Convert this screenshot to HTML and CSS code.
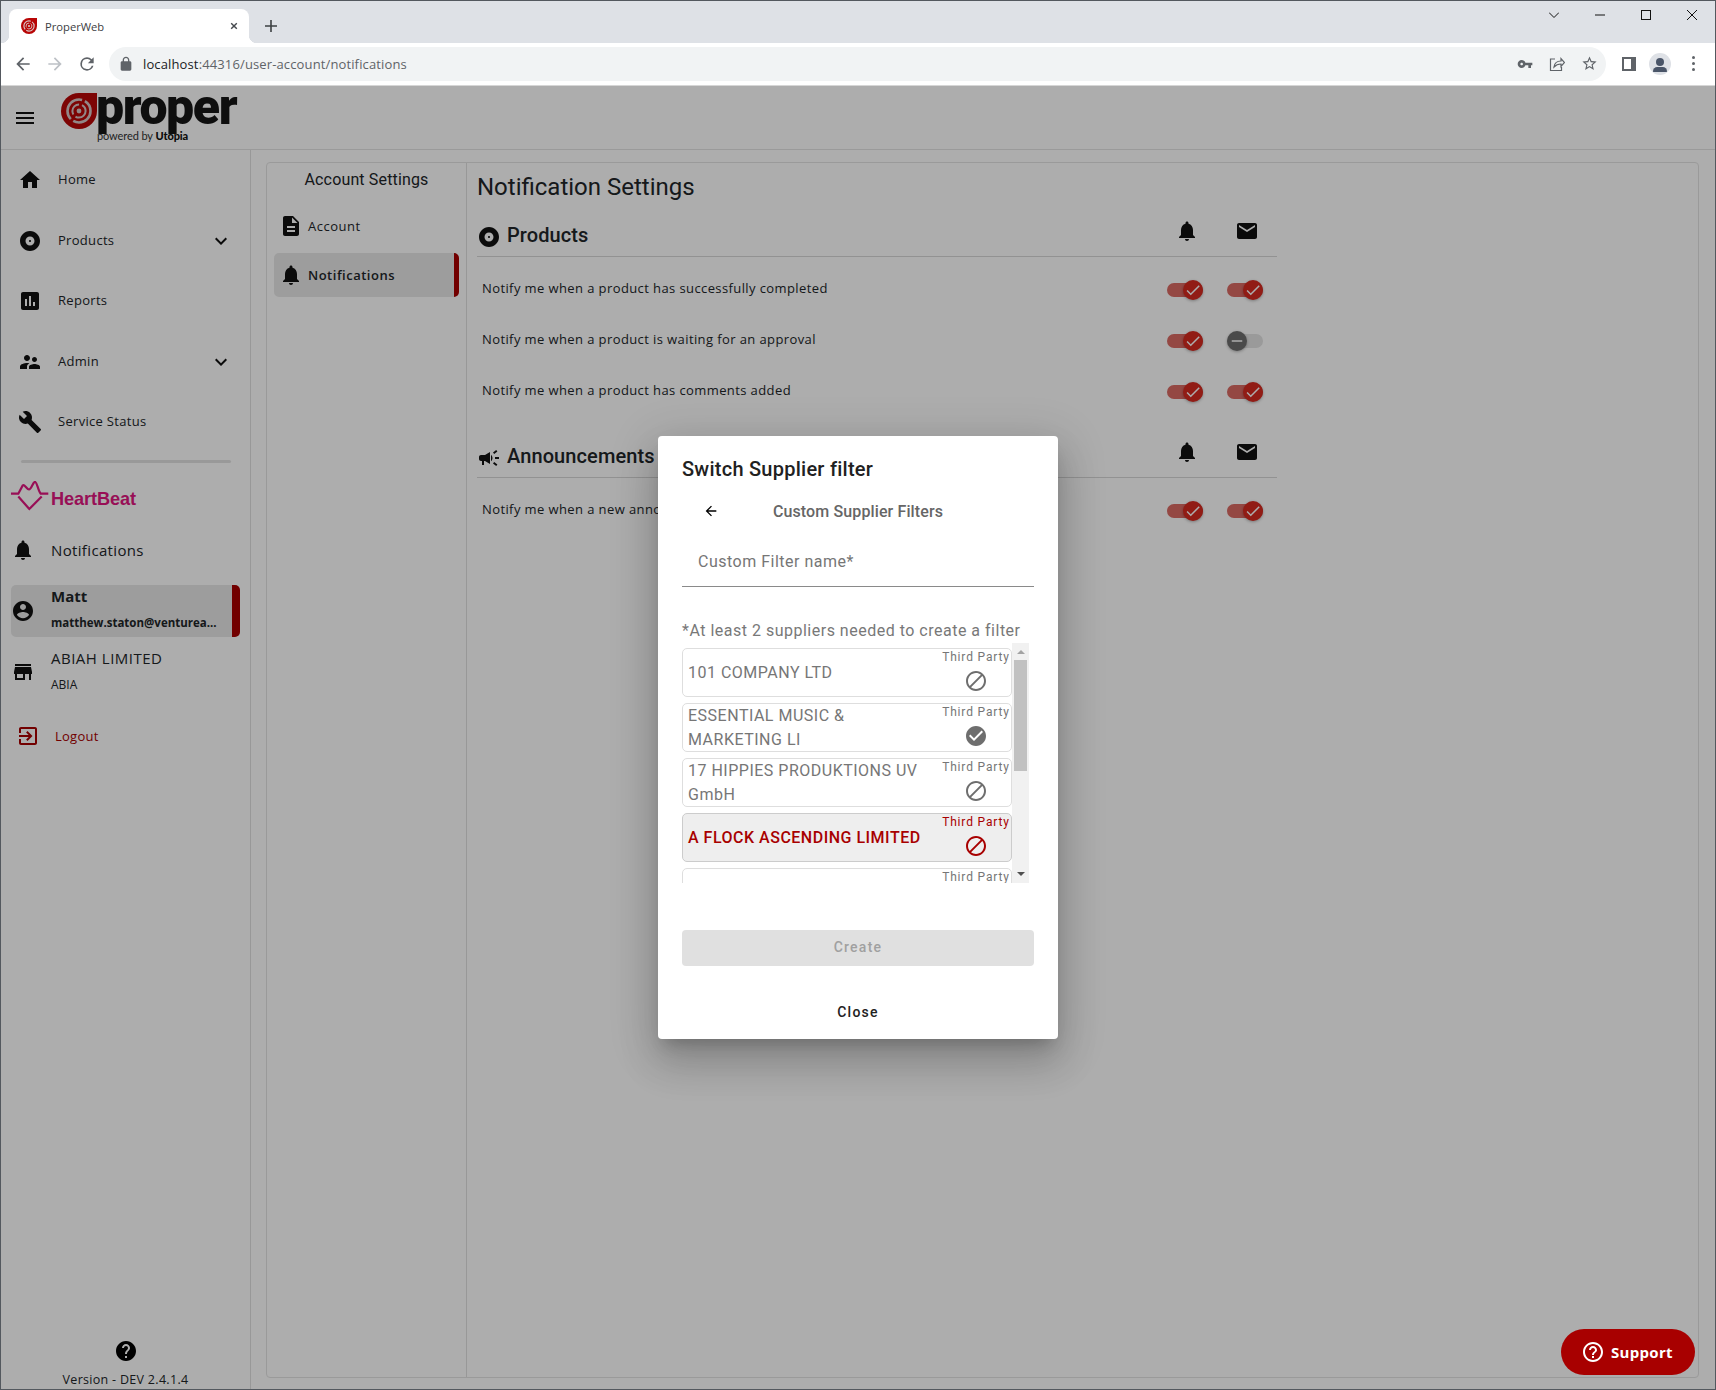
FILE: index.html
```html
<!DOCTYPE html>
<html lang="en">
<head>
<meta charset="UTF-8">
<meta name="viewport" content="width=device-width, initial-scale=1.0">
<title>ProperWeb</title>
<link rel="stylesheet" href="styles.css">
</head>
<body>

<svg class="sprite" xmlns="http://www.w3.org/2000/svg">
  <symbol id="i-menu" viewBox="0 0 24 24"><path d="M3 18h18v-2H3v2zm0-5h18v-2H3v2zm0-7v2h18V6H3z"/></symbol>
  <symbol id="i-home" viewBox="0 0 24 24"><path d="M10 20v-6h4v6h5v-8h3L12 3 2 12h3v8z"/></symbol>
  <symbol id="i-album" viewBox="0 0 24 24"><path d="M12 2C6.48 2 2 6.48 2 12s4.48 10 10 10 10-4.48 10-10S17.52 2 12 2zm0 14.5c-2.49 0-4.5-2.01-4.5-4.5S9.51 7.5 12 7.5s4.5 2.01 4.5 4.5-2.01 4.5-4.5 4.5zm0-5.5c-.55 0-1 .45-1 1s.45 1 1 1 1-.45 1-1-.45-1-1-1z"/></symbol>
  <symbol id="i-chart" viewBox="0 0 24 24"><path d="M19 3H5c-1.1 0-2 .9-2 2v14c0 1.1.9 2 2 2h14c1.1 0 2-.9 2-2V5c0-1.1-.9-2-2-2zM9 17H7v-7h2v7zm4 0h-2V7h2v10zm4 0h-2v-4h2v4z"/></symbol>
  <symbol id="i-people" viewBox="0 0 24 24"><path d="M16.5 12c1.38 0 2.49-1.12 2.49-2.5S17.88 7 16.5 7C15.12 7 14 8.12 14 9.5s1.12 2.5 2.5 2.5zM9 11c1.66 0 2.99-1.34 2.99-3S10.66 5 9 5C7.34 5 6 6.34 6 8s1.34 3 3 3zm7.5 3c-1.83 0-5.5.92-5.5 2.75V19h11v-2.25c0-1.83-3.67-2.75-5.5-2.75zM9 13c-2.33 0-7 1.17-7 3.5V19h7v-2.25c0-.85.33-2.34 2.37-3.47C10.5 13.1 9.66 13 9 13z"/></symbol>
  <symbol id="i-wrench" viewBox="0 0 24 24"><path d="M22.7 19l-9.1-9.1c.9-2.3.4-5-1.5-6.9-2-2-5-2.4-7.4-1.3L9 6 6 9 1.6 4.7C.4 7.1.9 10.1 2.9 12.1c1.9 1.9 4.6 2.4 6.9 1.5l9.1 9.1c.4.4 1 .4 1.4 0l2.3-2.3c.5-.4.5-1.1.1-1.4z"/></symbol>
  <symbol id="i-chevron" viewBox="0 0 24 24"><path d="M16.59 8.59L12 13.17 7.41 8.59 6 10l6 6 6-6z"/></symbol>
  <symbol id="i-bell" viewBox="0 0 24 24"><path d="M12 22c1.1 0 2-.9 2-2h-4c0 1.1.89 2 2 2zm6-6v-5c0-3.07-1.64-5.64-4.5-6.32V4c0-.83-.67-1.5-1.5-1.5s-1.5.67-1.5 1.5v.68C7.63 5.36 6 7.92 6 11v5l-2 2v1h16v-1l-2-2z"/></symbol>
  <symbol id="i-account" viewBox="0 0 24 24"><path d="M12 2C6.48 2 2 6.48 2 12s4.48 10 10 10 10-4.48 10-10S17.52 2 12 2zm0 3c1.66 0 3 1.34 3 3s-1.34 3-3 3-3-1.34-3-3 1.34-3 3-3zm0 14.2c-2.5 0-4.71-1.28-6-3.22.03-1.99 4-3.08 6-3.08 1.99 0 5.97 1.09 6 3.08-1.29 1.94-3.5 3.22-6 3.22z"/></symbol>
  <symbol id="i-store" viewBox="0 0 24 24"><path d="M20 4H4v2h16V4zm1 10v-2l-1-5H4l-1 5v2h1v6h10v-6h4v6h2v-6h1zm-9 4H6v-4h6v4z"/></symbol>
  <symbol id="i-logout" viewBox="0 0 24 24"><path d="M10.09 15.59L11.5 17l5-5-5-5-1.41 1.41L12.67 11H3v2h9.67l-2.58 2.59zM19 3H5c-1.11 0-2 .9-2 2v4h2V5h14v14H5v-4H3v4c0 1.1.89 2 2 2h14c1.1 0 2-.9 2-2V5c0-1.1-.9-2-2-2z"/></symbol>
  <symbol id="i-doc" viewBox="0 0 24 24"><path d="M14 2H6c-1.1 0-1.99.9-1.99 2L4 20c0 1.1.89 2 1.99 2H18c1.1 0 2-.9 2-2V8l-6-6zm2 16H8v-2h8v2zm0-4H8v-2h8v2zm-3-5V3.5L18.5 9H13z"/></symbol>
  <symbol id="i-mail" viewBox="0 0 24 24"><path d="M20 4H4c-1.1 0-1.99.9-1.99 2L2 18c0 1.1.9 2 2 2h16c1.1 0 2-.9 2-2V6c0-1.1-.9-2-2-2zm0 4l-8 5-8-5V6l8 5 8-5v2z"/></symbol>
  <symbol id="i-campaign" viewBox="0 0 24 24"><path d="M18 11v2h4v-2h-4zm-2 6.61c.96.71 2.21 1.65 3.2 2.39.4-.53.8-1.07 1.2-1.6-.99-.74-2.24-1.68-3.2-2.4-.4.54-.8 1.08-1.2 1.61zM20.4 5.6c-.4-.53-.8-1.07-1.2-1.6-.99.74-2.24 1.68-3.2 2.4.4.53.8 1.07 1.2 1.6.96-.72 2.21-1.65 3.2-2.4zM4 9c-1.1 0-2 .9-2 2v2c0 1.1.9 2 2 2h1v4h2v-4h1l5 3V6L8 9H4zm11.5 3c0-1.33-.58-2.53-1.5-3.35v6.69c.92-.81 1.5-2.01 1.5-3.34z"/></symbol>
  <symbol id="i-help" viewBox="0 0 24 24"><path d="M12 2C6.48 2 2 6.48 2 12s4.48 10 10 10 10-4.48 10-10S17.52 2 12 2zm1 17h-2v-2h2v2zm2.07-7.75l-.9.92C13.45 12.9 13 13.5 13 15h-2v-.5c0-1.1.45-2.1 1.17-2.83l1.24-1.26c.37-.36.59-.86.59-1.41 0-1.1-.9-2-2-2s-2 .9-2 2H8c0-2.21 1.79-4 4-4s4 1.79 4 4c0 .88-.36 1.68-.93 2.25z"/></symbol>
  <symbol id="i-help-outline" viewBox="0 0 24 24"><path d="M11 18h2v-2h-2v2zm1-16C6.48 2 2 6.48 2 12s4.48 10 10 10 10-4.48 10-10S17.52 2 12 2zm0 18c-4.41 0-8-3.59-8-8s3.59-8 8-8 8 3.59 8 8-3.59 8-8 8zm0-14c-2.21 0-4 1.79-4 4h2c0-1.1.9-2 2-2s2 .9 2 2c0 2-3 1.75-3 5h2c0-2.25 3-2.5 3-5 0-2.21-1.79-4-4-4z"/></symbol>
  <symbol id="i-block" viewBox="0 0 24 24"><path d="M12 2C6.48 2 2 6.48 2 12s4.48 10 10 10 10-4.48 10-10S17.52 2 12 2zM4 12c0-4.42 3.58-8 8-8 1.85 0 3.55.63 4.9 1.69L5.69 16.9C4.63 15.55 4 13.85 4 12zm8 8c-1.85 0-3.55-.63-4.9-1.69L18.31 7.1C19.37 8.45 20 10.15 20 12c0 4.42-3.58 8-8 8z"/></symbol>
  <symbol id="i-check-circle" viewBox="0 0 24 24"><path d="M12 2C6.48 2 2 6.48 2 12s4.48 10 10 10 10-4.48 10-10S17.52 2 12 2zm-2 15l-5-5 1.41-1.41L10 14.17l7.59-7.59L19 8l-9 9z"/></symbol>
  <symbol id="i-back" viewBox="0 0 24 24"><path d="M20 11H7.83l5.59-5.59L12 4l-8 8 8 8 1.41-1.41L7.83 13H20v-2z"/></symbol>
  <symbol id="i-check" viewBox="0 0 24 24"><path d="M9 16.17L4.83 12l-1.42 1.41L9 19 21 7l-1.41-1.41z"/></symbol>
  <symbol id="i-minus" viewBox="0 0 24 24"><path d="M19 13H5v-2h14v2z"/></symbol>
  <symbol id="i-lock" viewBox="0 0 24 24"><path d="M18 8h-1V6c0-2.76-2.24-5-5-5S7 3.24 7 6v2H6c-1.1 0-2 .9-2 2v10c0 1.1.9 2 2 2h12c1.1 0 2-.9 2-2V10c0-1.1-.9-2-2-2zm-6-5c1.66 0 3 1.34 3 3v2H9V6c0-1.66 1.34-3 3-3z"/></symbol>
  <symbol id="i-key" viewBox="0 0 24 24"><path d="M12.65 10C11.83 7.67 9.61 6 7 6c-3.31 0-6 2.69-6 6s2.69 6 6 6c2.61 0 4.83-1.67 5.65-4H17v4h4v-4h2v-4H12.65zM7 14c-1.1 0-2-.9-2-2s.9-2 2-2 2 .9 2 2-.9 2-2 2z"/></symbol>
  <symbol id="i-star" viewBox="0 0 24 24"><path d="M22 9.24l-7.19-.62L12 2 9.19 8.63 2 9.24l5.46 4.73L5.82 21 12 17.27 18.18 21l-1.63-7.03L22 9.24zM12 15.4l-3.76 2.27 1-4.28-3.32-2.88 4.38-.38L12 6.1l1.71 4.04 4.38.38-3.32 2.88 1 4.28L12 15.4z"/></symbol>
  <symbol id="i-mark" viewBox="0 0 36 36">
    <path fill="#b80606" d="M18 0H36V18A18 18 0 1 1 18 0Z"/>
    <circle cx="18" cy="18" r="11.5" fill="none" stroke="#d8c8c8" stroke-width="2.6" stroke-dasharray="24 3 30 3"/>
    <circle cx="18" cy="18" r="6.6" fill="none" stroke="#d8c8c8" stroke-width="2" stroke-dasharray="14 3"/>
    <circle cx="18" cy="18" r="2.4" fill="#d8c8c8"/>
  </symbol>
</svg>

<div class="window">

  <div class="tabstrip">
    <div class="tab">
      <svg class="favicon"><use href="#i-mark"/></svg>
      <span class="tab-title">ProperWeb</span>
      <svg class="tab-close" viewBox="0 0 10 10"><path d="M1.5 1.5l7 7m0-7l-7 7"/></svg>
    </div>
    <svg class="tab-new" viewBox="0 0 12 12"><path d="M6 0v12M0 6h12"/></svg>
    <div class="win-controls">
      <svg class="win-chevron" viewBox="0 0 10 6"><path d="M0 .5l5 5 5-5"/></svg>
      <svg class="win-min" viewBox="0 0 10 10"><path d="M0 5h10"/></svg>
      <svg class="win-max" viewBox="0 0 10 10"><rect x=".5" y=".5" width="9" height="9"/></svg>
      <svg class="win-close" viewBox="0 0 10 10"><path d="M0 0l10 10m0-10L0 10"/></svg>
    </div>
  </div>

  <div class="toolbar">
    <svg class="tool-btn" viewBox="0 0 24 24"><use href="#i-back"/></svg>
    <svg class="tool-btn tool-off" viewBox="0 0 24 24"><use href="#i-back" transform="rotate(180 12 12)"/></svg>
    <svg class="tool-reload" viewBox="0 0 24 24"><path d="M17.65 6.35A7.96 7.96 0 0 0 12 4a8 8 0 1 0 7.73 10h-2.08A6 6 0 1 1 12 6c1.66 0 3.14.69 4.22 1.78L13 11h7V4l-2.35 2.35z"/></svg>
    <div class="omnibox">
      <svg class="omni-lock"><use href="#i-lock"/></svg>
      <span class="url"><span class="url-host">localhost</span>:44316/user-account/notifications</span>
      <svg class="omni-key"><use href="#i-key"/></svg>
      <svg class="omni-share" viewBox="0 0 16 16"><path d="M6 3H1.500v11.500h11V11M5 11c.5-4 3-6 7-6V2.500l3.500 4-3.500 4V8c-3 0-5 .8-7 3z"/></svg>
      <svg class="omni-star"><use href="#i-star"/></svg>
    </div>
    <div class="side-panel-btn"><span></span></div>
    <div class="profile-btn"></div>
    <div class="menu-dots"><span></span><span></span><span></span></div>
  </div>

  <div class="app">
    <header class="appbar">
      <svg class="icon burger"><use href="#i-menu"/></svg>
      <svg class="logo-mark"><use href="#i-mark"/></svg>
      <div class="logo-text">
        <div class="logo-word">proper</div>
        <div class="logo-sub">powered by <b>Utopia</b></div>
      </div>
    </header>

    <div class="app-body">
      <aside class="sidebar">
        <nav class="nav">
          <a class="nav-item"><svg class="icon"><use href="#i-home"/></svg><span>Home</span></a>
          <a class="nav-item"><svg class="icon"><use href="#i-album"/></svg><span>Products</span><svg class="icon nav-chevron"><use href="#i-chevron"/></svg></a>
          <a class="nav-item"><svg class="icon"><use href="#i-chart"/></svg><span>Reports</span></a>
          <a class="nav-item"><svg class="icon"><use href="#i-people"/></svg><span>Admin</span><svg class="icon nav-chevron"><use href="#i-chevron"/></svg></a>
          <a class="nav-item"><svg class="icon"><use href="#i-wrench"/></svg><span>Service Status</span></a>
        </nav>
        <div class="side-divider"></div>

        <div class="heartbeat">
          <svg class="heartbeat-icon" viewBox="0 0 38 30"><path d="M0 12.700H7.300L11.700 4.500C13.500 2.500 15.500 8.500 18 8.500S22 .8 24 .8 27 9.500 29.700 12.700H37.300M7.300 15.500L18.300 28 30.700 15.500"/></svg>
          <span class="heartbeat-name">HeartBeat</span>
        </div>

        <a class="side-link side-notify"><svg class="icon"><use href="#i-bell"/></svg><span>Notifications</span></a>

        <a class="side-link user-row">
          <svg class="icon"><use href="#i-account"/></svg>
          <div class="user-text">
            <div class="user-name">Matt</div>
            <div class="user-mail">matthew.staton@venturea...</div>
          </div>
        </a>

        <a class="side-link org-row">
          <svg class="icon"><use href="#i-store"/></svg>
          <div class="org-text">
            <div class="org-name">ABIAH LIMITED</div>
            <div class="org-code">ABIA</div>
          </div>
        </a>

        <a class="logout"><svg class="icon"><use href="#i-logout"/></svg><span>Logout</span></a>

        <div class="side-foot">
          <svg class="icon foot-help"><use href="#i-help"/></svg>
          <div class="version">Version - DEV 2.4.1.4</div>
        </div>
      </aside>

      <main class="main">
        <div class="panel">
          <div class="subnav">
            <div class="subnav-title">Account Settings</div>
            <a class="subnav-item"><svg class="icon"><use href="#i-doc"/></svg><span>Account</span></a>
            <a class="subnav-item subnav-active"><svg class="icon"><use href="#i-bell"/></svg><span>Notifications</span></a>
          </div>

          <div class="settings">
            <h1 class="settings-title">Notification Settings</h1>

            <section class="group">
              <div class="group-head">
                <svg class="icon group-icon"><use href="#i-album"/></svg>
                <h2>Products</h2>
                <svg class="icon head-bell"><use href="#i-bell"/></svg>
                <svg class="icon head-mail"><use href="#i-mail"/></svg>
              </div>
              <div class="setting-row">
                <span class="setting-text">Notify me when a product has successfully completed</span>
                <span class="toggle on"><span class="knob"><svg><use href="#i-check"/></svg></span></span>
                <span class="toggle on"><span class="knob"><svg><use href="#i-check"/></svg></span></span>
              </div>
              <div class="setting-row">
                <span class="setting-text">Notify me when a product is waiting for an approval</span>
                <span class="toggle on"><span class="knob"><svg><use href="#i-check"/></svg></span></span>
                <span class="toggle off"><span class="knob"><svg><use href="#i-minus"/></svg></span></span>
              </div>
              <div class="setting-row">
                <span class="setting-text">Notify me when a product has comments added</span>
                <span class="toggle on"><span class="knob"><svg><use href="#i-check"/></svg></span></span>
                <span class="toggle on"><span class="knob"><svg><use href="#i-check"/></svg></span></span>
              </div>
            </section>

            <section class="group group-next">
              <div class="group-head">
                <svg class="icon group-icon"><use href="#i-campaign"/></svg>
                <h2>Announcements</h2>
                <svg class="icon head-bell"><use href="#i-bell"/></svg>
                <svg class="icon head-mail"><use href="#i-mail"/></svg>
              </div>
              <div class="setting-row">
                <span class="setting-text">Notify me when a new announcement is added</span>
                <span class="toggle on"><span class="knob"><svg><use href="#i-check"/></svg></span></span>
                <span class="toggle on"><span class="knob"><svg><use href="#i-check"/></svg></span></span>
              </div>
            </section>
          </div>
        </div>
      </main>
    </div>

    <div class="overlay">
      <div class="modal">
        <h3 class="modal-title">Switch Supplier filter</h3>
        <div class="modal-sub">
          <svg class="icon modal-back"><use href="#i-back"/></svg>
          <span>Custom Supplier Filters</span>
        </div>
        <div class="field">Custom Filter name*</div>
        <p class="hint">*At least 2 suppliers needed to create a filter</p>

        <div class="list-wrap">
          <div class="list">
            <div class="supplier">
              <div class="supplier-name">101 COMPANY LTD</div>
              <div class="supplier-side"><span>Third Party</span><svg class="icon"><use href="#i-block"/></svg></div>
            </div>
            <div class="supplier">
              <div class="supplier-name">ESSENTIAL MUSIC &amp; MARKETING LI</div>
              <div class="supplier-side"><span>Third Party</span><svg class="icon"><use href="#i-check-circle"/></svg></div>
            </div>
            <div class="supplier">
              <div class="supplier-name">17 HIPPIES PRODUKTIONS UV GmbH</div>
              <div class="supplier-side"><span>Third Party</span><svg class="icon"><use href="#i-block"/></svg></div>
            </div>
            <div class="supplier supplier-active">
              <div class="supplier-name">A FLOCK ASCENDING LIMITED</div>
              <div class="supplier-side"><span>Third Party</span><svg class="icon"><use href="#i-block"/></svg></div>
            </div>
            <div class="supplier">
              <div class="supplier-name"></div>
              <div class="supplier-side"><span>Third Party</span><svg class="icon"><use href="#i-block"/></svg></div>
            </div>
          </div>
          <div class="scrollbar">
            <span class="scroll-up"></span>
            <span class="scroll-thumb"></span>
            <span class="scroll-down"></span>
          </div>
        </div>

        <button class="btn-create" disabled>Create</button>
        <button class="btn-close">Close</button>
      </div>
    </div>

    <a class="support"><svg><use href="#i-help-outline"/></svg><span>Support</span></a>
  </div>
</div>

</body>
</html>
```

FILE: styles.css
```css
* {
  box-sizing: border-box;
}

html,
body {
  margin: 0;
  padding: 0;
  height: 100%;
}

body {
  font-family: "Open Sans", Arial, sans-serif;
  color: #212529;
  background: #fff;
  overflow: hidden;
}

.sprite {
  display: none;
}

.icon {
  width: 24px;
  height: 24px;
  flex: none;
  fill: #111;
}

.window {
  height: 100vh;
  display: flex;
  flex-direction: column;
  border: 1px solid #53585e;
}

/* browser chrome */
.tabstrip {
  height: 42px;
  background: #dee1e6;
  display: flex;
  align-items: flex-end;
  padding-left: 8px;
  flex: none;
}

.tab {
  position: relative;
  width: 240px;
  height: 34px;
  background: #fff;
  border-radius: 8px 8px 0 0;
  display: flex;
  align-items: center;
  padding: 0 8px 0 12px;
}

.tab::before,
.tab::after {
  content: "";
  position: absolute;
  bottom: 0;
  width: 8px;
  height: 8px;
}

.tab::before {
  left: -8px;
  background: radial-gradient(circle at 0 0, #dee1e6 8px, #fff 8.5px);
}

.tab::after {
  right: -8px;
  background: radial-gradient(circle at 100% 0, #dee1e6 8px, #fff 8.5px);
}

.favicon {
  width: 16px;
  height: 16px;
  flex: none;
}

.tab-title {
  margin-left: 8px;
  font-size: 11.2px;
  color: #3c4043;
  flex: 1;
}

.tab-close {
  width: 8px;
  height: 8px;
  margin-right: 3px;
  fill: none;
  stroke: #45494e;
  stroke-width: 1.8;
}

.tab-new {
  width: 12px;
  height: 12px;
  margin: 0 0 11px 16px;
  fill: none;
  stroke: #3c4043;
  stroke-width: 1.6;
}

.win-controls {
  margin-left: auto;
  align-self: flex-start;
  display: flex;
  align-items: center;
  height: 28px;
  padding-right: 18px;
}

.win-controls svg {
  fill: none;
  stroke: #111;
  stroke-width: 1;
  flex: none;
}

.win-chevron {
  width: 10px;
  height: 6px;
}

.win-min,
.win-max,
.win-close {
  width: 10px;
  height: 10px;
  margin-left: 36px;
}

.toolbar {
  height: 43px;
  background: #fff;
  border-bottom: 1px solid #d6d6d6;
  display: flex;
  align-items: center;
  padding: 0 0 1px 12px;
  flex: none;
}

.tool-btn {
  width: 20px;
  height: 20px;
  fill: #5f6368;
  margin-right: 12px;
}

.tool-off {
  fill: #bdc1c6;
}

.tool-reload {
  width: 20px;
  height: 20px;
  fill: #5f6368;
}

.omnibox {
  width: 1497px;
  height: 34px;
  margin-left: 12px;
  border-radius: 17px;
  background: #f1f3f4;
  display: flex;
  align-items: center;
  padding: 0 0 0 9px;
}

.omni-lock {
  width: 16px;
  height: 16px;
  fill: #5f6368;
}

.url {
  margin-left: 9px;
  font-size: 13px;
  letter-spacing: .13px;
  color: #5f6368;
  flex: 1;
}

.url-host {
  color: #202124;
}

.omni-key {
  width: 16px;
  height: 16px;
  fill: #5f6368;
}

.omni-share {
  width: 16px;
  height: 16px;
  margin-left: 16px;
  fill: none;
  stroke: #5f6368;
  stroke-width: 1.2;
}

.omni-star {
  width: 17px;
  height: 17px;
  margin: 0 8px 0 16px;
  fill: #5f6368;
}

.side-panel-btn {
  width: 14px;
  height: 14px;
  margin-left: 16px;
  border: 2px solid #5f6368;
  background: #5f6368;
}

.side-panel-btn span {
  display: block;
  width: 7px;
  height: 10px;
  background: #fff;
}

.profile-btn {
  width: 22px;
  height: 22px;
  margin-left: 13px;
  border-radius: 50%;
  background: #dee1e6;
  position: relative;
  overflow: hidden;
}

.profile-btn::before {
  content: "";
  position: absolute;
  left: 7px;
  top: 5px;
  width: 8px;
  height: 8px;
  border-radius: 50%;
  background: #4a5568;
}

.profile-btn::after {
  content: "";
  position: absolute;
  left: 4px;
  top: 14px;
  width: 14px;
  height: 5px;
  border-radius: 5px 5px 1px 1px;
  background: #4a5568;
}

.menu-dots {
  margin-left: 21px;
  display: flex;
  flex-direction: column;
  gap: 3px;
}

.menu-dots span {
  width: 3px;
  height: 3px;
  border-radius: 50%;
  background: #5f6368;
}

/* app */
.app {
  position: relative;
  flex: 1;
  min-height: 0;
  display: flex;
  flex-direction: column;
  background: #fff;
}

.appbar {
  height: 64px;
  flex: none;
  display: flex;
  align-items: flex-start;
  border-bottom: 1px solid #e4e4e4;
}

.burger {
  margin: 20px 0 0 12px;
}

.logo-mark {
  width: 36px;
  height: 36px;
  margin: 7px 0 0 24px;
  flex: none;
}

.logo-text {
  margin-left: -1px;
}

.logo-word {
  font-family: Roboto, Arial, sans-serif;
  font-weight: 900;
  font-size: 50px;
  line-height: 42px;
  letter-spacing: -1.4px;
  color: #151515;
  height: 42px;
}

.logo-sub {
  margin: 1px 0 0 1px;
  font-family: Lato, Arial, sans-serif;
  font-size: 11px;
  line-height: 13px;
  letter-spacing: -.1px;
  color: #333;
}

.logo-sub b {
  font-weight: 900;
  color: #111;
}

.app-body {
  flex: 1;
  min-height: 0;
  display: flex;
}

.sidebar {
  width: 250px;
  flex: none;
  border-right: 1px solid #e0e0e0;
  display: flex;
  flex-direction: column;
}

.nav-item {
  height: 60.5px;
  display: flex;
  align-items: center;
  padding: 0 17px 0 17px;
  font-size: 13px;
  letter-spacing: .3px;
}

.nav-item span {
  margin-left: 16px;
  margin-bottom: 2px;
}

.nav-chevron {
  margin-left: auto;
}

.side-divider {
  height: 3px;
  margin: 7px 19px 0 20px;
  border-radius: 2px;
  background: #e2e2e2;
}

.heartbeat {
  display: flex;
  align-items: flex-start;
  margin: 18px 0 0 10px;
  height: 30px;
}

.heartbeat-icon {
  width: 38px;
  height: 30px;
  flex: none;
  fill: none;
  stroke: #e0177f;
  stroke-width: 2.2;
}

.heartbeat-name {
  margin: 7px 0 0 2px;
  font-family: "Liberation Sans", Arial, sans-serif;
  font-weight: 700;
  font-size: 18.2px;
  line-height: 22px;
  letter-spacing: -.1px;
  color: #e0177f;
}

.side-link {
  display: flex;
  align-items: center;
  margin: 0 10px;
}

.side-notify {
  height: 44px;
  margin-top: 17px;
  font-size: 15px;
  letter-spacing: .35px;
}

.side-notify span {
  margin-left: 16px;
}

.user-row {
  height: 52px;
  margin-top: 13px;
  background: #e8e8e8;
  border-right: 8px solid #a80000;
  border-radius: 5px;
}

.user-text {
  margin-left: 16px;
}

.org-text {
  margin-left: 16px;
}

.user-name {
  font-weight: 700;
  font-size: 15px;
  line-height: 24px;
  margin-top: -1px;
}

.user-mail {
  font-weight: 700;
  font-size: 11.5px;
  line-height: 29px;
}

.org-row {
  height: 52px;
  margin-top: 9px;
}

.org-name {
  font-size: 15px;
  line-height: 26px;
  letter-spacing: .5px;
}

.org-code {
  font-size: 12px;
  line-height: 27px;
}

.logout {
  display: flex;
  align-items: center;
  height: 40px;
  margin: 18px 0 0 15px;
  color: #a80000;
  font-size: 13px;
  letter-spacing: .25px;
}

.logout .icon {
  fill: #a80000;
}

.logout span {
  margin-left: 15px;
}

.side-foot {
  margin-top: auto;
  display: flex;
  flex-direction: column;
  align-items: center;
}

.foot-help {
  fill: #000;
}

.version {
  margin-top: 8px;
  font-size: 12.5px;
  letter-spacing: .3px;
  line-height: 18px;
}

.main {
  flex: 1;
  min-width: 0;
  padding: 12px 16px 11px 15px;
}

.panel {
  height: 100%;
  border: 1px solid #e4e4e4;
  border-radius: 4px;
  display: flex;
}

.subnav {
  width: 200px;
  flex: none;
  border-right: 1px solid #e0e0e0;
  padding: 5px 7px 0 7px;
}

.subnav-title {
  font-family: Roboto, Arial, sans-serif;
  font-size: 16px;
  line-height: 24px;
  letter-spacing: .15px;
  text-align: center;
  margin-bottom: 11.5px;
}

.subnav-item {
  height: 44px;
  margin-bottom: 5px;
  display: flex;
  align-items: center;
  padding-left: 5px;
  font-size: 13px;
  letter-spacing: .5px;
  border-radius: 5px;
}

.subnav-item span {
  margin: 1px 0 0 5px;
}

.subnav-active {
  background: #e8e8e8;
  border-right: 5px solid #a80000;
  font-weight: 600;
}

.settings {
  flex: 1;
  min-width: 0;
  padding: 9px 0 0 10px;
}

.settings-title {
  margin: 0 0 5px;
  font-family: Roboto, Arial, sans-serif;
  font-weight: 400;
  font-size: 24px;
  line-height: 30px;
}

.group {
  width: 800px;
}

.group-next {
  margin-top: 11px;
}

.group-head {
  height: 50px;
  display: flex;
  align-items: flex-start;
  border-bottom: 1px solid #d8d8d8;
  padding-right: 18px;
}

.group-head h2 {
  margin: 14px 0 0 6px;
  font-family: Roboto, Arial, sans-serif;
  font-weight: 500;
  font-size: 20px;
  line-height: 28px;
  letter-spacing: .1px;
  flex: 1;
}

.group-icon {
  margin-top: 18px;
}

.head-bell,
.head-mail {
  margin-top: 12px;
}

.head-mail {
  margin-left: 36px;
}

.setting-row {
  height: 51px;
  display: flex;
  align-items: center;
  padding: 0 14px 0 5px;
}

.group-head + .setting-row {
  margin-top: 7px;
}

.setting-text {
  flex: 1;
  font-size: 13px;
  letter-spacing: .4px;
  margin-bottom: 3px;
}

.toggle {
  position: relative;
  width: 36px;
  height: 14px;
  border-radius: 7px;
  margin-left: 24px;
  flex: none;
}

.toggle.on {
  background: #da6a64;
}

.toggle.off {
  background: #e3e3e3;
}

.knob {
  position: absolute;
  top: -3px;
  width: 20px;
  height: 20px;
  border-radius: 50%;
  display: flex;
  align-items: center;
  justify-content: center;
  box-shadow: 0 1px 3px rgba(0, 0, 0, .3);
}

.knob svg {
  width: 18px;
  height: 18px;
  fill: #fff;
}

.toggle.on .knob {
  right: 0;
  background: #d62a20;
}

.toggle.off .knob {
  left: 0;
  background: #6e6e6e;
}

/* dialog */
.overlay {
  position: absolute;
  inset: 0;
  background: rgba(0, 0, 0, .32);
  display: flex;
  align-items: center;
  justify-content: center;
}

.modal {
  width: 400px;
  height: 603px;
  background: #fff;
  border-radius: 4px;
  padding: 17px 24px 0;
  font-family: Roboto, Arial, sans-serif;
  display: flex;
  flex-direction: column;
  box-shadow: 0 11px 15px -7px rgba(0, 0, 0, .2), 0 24px 38px 3px rgba(0, 0, 0, .14), 0 9px 46px 8px rgba(0, 0, 0, .12);
}

.modal-title {
  margin: 0;
  font-weight: 500;
  font-size: 20px;
  line-height: 32px;
  letter-spacing: .25px;
  color: #212121;
}

.modal-sub {
  display: grid;
  grid-template-columns: 58px 1fr 58px;
  align-items: center;
  justify-items: center;
  height: 24px;
  margin-top: 14px;
  font-weight: 500;
  font-size: 16px;
  letter-spacing: .12px;
  color: #666;
}

.modal-back {
  width: 16px;
  height: 16px;
  fill: #000;
}

.field {
  height: 52px;
  margin-top: 12px;
  padding: 15px 0 0 16px;
  font-size: 16px;
  line-height: 24px;
  letter-spacing: .5px;
  color: #767676;
  border-bottom: 1px solid #8a8a8a;
}

.hint {
  margin: 32px 0 0;
  font-size: 16px;
  line-height: 24px;
  letter-spacing: .5px;
  color: #787878;
  white-space: nowrap;
}

.list-wrap {
  width: 347px;
  height: 240px;
  display: flex;
  overflow: hidden;
}

.list {
  width: 330px;
  flex: none;
  padding-top: 5px;
  display: flex;
  flex-direction: column;
  gap: 6px;
}

.supplier {
  height: 49px;
  flex: none;
  display: flex;
  border: 1px solid #dedede;
  border-radius: 5px;
  color: #767676;
}

.supplier-name {
  flex: 1;
  align-self: center;
  padding-left: 5px;
  font-size: 16px;
  line-height: 24px;
  letter-spacing: .5px;
}

.supplier-side {
  width: 70px;
  flex: none;
  padding-top: 1px;
  display: flex;
  flex-direction: column;
  align-items: center;
  font-size: 12px;
  line-height: 14px;
  letter-spacing: .85px;
  white-space: nowrap;
}

.supplier-side .icon {
  fill: #6e6e6e;
  margin-top: 5px;
}

.supplier-active {
  background: #eee;
  border-color: #ccc;
  color: #a80000;
}

.supplier-active .supplier-name {
  font-weight: 500;
}

.supplier-active .icon {
  fill: #a80000;
}

.scrollbar {
  width: 17px;
  flex: none;
  background: #f1f1f1;
  display: flex;
  flex-direction: column;
  align-items: center;
}

.scroll-up {
  margin-top: 7px;
  border: 4px solid transparent;
  border-top: 0;
  border-bottom: 4px solid #a3a3a3;
}

.scroll-thumb {
  width: 13px;
  height: 111px;
  margin-top: 6px;
  background: #c1c1c1;
}

.scroll-down {
  margin-top: auto;
  margin-bottom: 7px;
  border: 4px solid transparent;
  border-bottom: 0;
  border-top: 4px solid #505050;
}

.btn-create {
  height: 36px;
  margin-top: 47px;
  padding: 0 0 2px;
  border: 0;
  border-radius: 4px;
  background: #e0e0e0;
  color: #a0a0a0;
  font-family: Roboto, Arial, sans-serif;
  font-weight: 500;
  font-size: 14px;
  letter-spacing: 1.25px;
}

.btn-close {
  height: 36px;
  margin-top: 28px;
  border: 0;
  background: none;
  color: #222;
  font-family: Roboto, Arial, sans-serif;
  font-weight: 500;
  font-size: 14px;
  letter-spacing: 1.25px;
}

.support {
  position: absolute;
  right: 20px;
  bottom: 14px;
  width: 134px;
  height: 46px;
  border-radius: 23px;
  background: #a80000;
  color: #fff;
  font-weight: 700;
  font-size: 15px;
  letter-spacing: .3px;
  display: flex;
  align-items: center;
  padding-left: 20px;
}

.support svg {
  width: 24px;
  height: 24px;
  fill: #fff;
  flex: none;
}

.support span {
  margin-left: 6px;
}
```
